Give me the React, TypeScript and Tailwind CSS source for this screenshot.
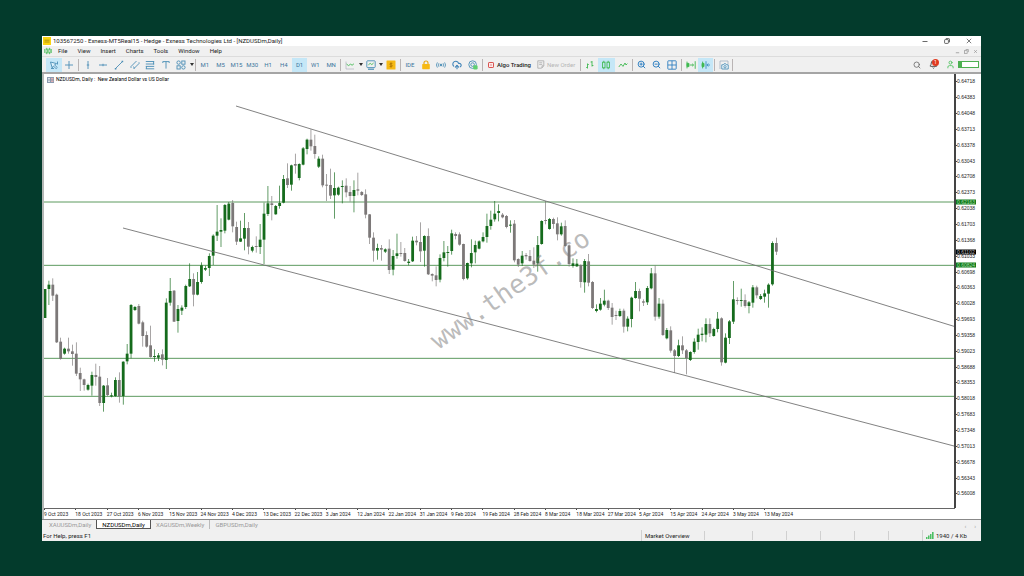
import React from 'react'
import { Bell, CloudUpload, Lock, Search, User, ZoomIn, ZoomOut } from 'lucide-react'
import clsx from 'clsx'

// high, body top, body bottom, low, 1 = up / 0 = down
type Bar = [number, number, number, number, number]

interface Segment {
  base: number
  bars: Bar[]
}

const BAR_STEP = 11.733

const segments: Segment[] = [
  {
    base: 348,
    bars: [
      [297, 297, 384, 384, 1], [272, 284, 297, 345, 1], [265, 284, 317, 333, 0], [311, 314, 457, 459, 0],
      [443, 455, 507, 509, 0], [473, 476, 491, 494, 1], [443, 476, 484, 491, 0], [464, 484, 492, 527, 0],
      [457, 491, 551, 558, 0], [533, 549, 568, 603, 0], [566, 568, 585, 602, 0], [581, 585, 599, 602, 1],
      [545, 555, 587, 617, 1], [521, 555, 561, 587, 0], [528, 560, 639, 648, 0], [585, 587, 639, 665, 1],
      [564, 586, 615, 619, 0], [608, 616, 619, 622, 1], [562, 570, 618, 620, 1], [547, 570, 619, 638, 0],
      [514, 515, 618, 644, 1], [462, 491, 514, 523, 1], [342, 345, 491, 505, 1], [348, 351, 360, 363, 1],
      [342, 348, 401, 403, 0], [392, 397, 438, 470, 0], [424, 435, 470, 473, 0], [407, 466, 501, 503, 0],
      [478, 498, 501, 515, 1], [489, 496, 503, 513, 1], [478, 493, 509, 526, 0], [325, 338, 510, 537, 1],
      [264, 303, 338, 347, 1], [300, 302, 395, 396, 0], [345, 357, 393, 428, 1], [346, 353, 362, 375, 1],
      [284, 288, 351, 357, 1], [220, 267, 289, 291, 1], [250, 267, 314, 349, 0], [246, 276, 314, 316, 1],
      [217, 226, 276, 281, 1], [227, 234, 239, 243, 1], [190, 198, 234, 258, 1], [133, 137, 197, 225, 1],
      [45, 125, 137, 153, 1], [85, 120, 125, 171, 1], [42, 45, 122, 130, 1], [36, 41, 89, 91, 1],
      [30, 39, 109, 127, 0], [95, 111, 155, 165, 0], [92, 145, 155, 156, 1], [69, 114, 146, 181, 1],
      [96, 114, 170, 193, 0], [167, 171, 182, 187, 1], [139, 168, 171, 188, 0], [102, 149, 171, 192, 1],
      [38, 71, 149, 222, 1],
    ],
  },
  {
    base: 63,
    bars: [
      [273, 325, 357, 363, 1], [303, 325, 330, 376, 0], [330, 333, 358, 359, 1], [272, 324, 333, 341, 1],
      [240, 252, 323, 325, 1], [205, 250, 270, 279, 0], [209, 211, 269, 287, 1], [176, 207, 212, 236, 0],
      [205, 207, 249, 256, 1], [156, 160, 209, 211, 1], [131, 134, 162, 178, 1], [103, 134, 154, 167, 0],
      [119, 153, 177, 191, 0], [184, 191, 215, 219, 1], [179, 191, 271, 277, 0], [237, 269, 272, 318, 0],
      [221, 270, 302, 312, 0], [232, 279, 301, 371, 1], [275, 278, 299, 302, 1], [256, 273, 276, 325, 1],
      [250, 272, 292, 307, 0], [273, 291, 303, 320, 0], [256, 285, 303, 352, 1], [233, 283, 287, 301, 0],
      [288, 291, 300, 303, 0], [283, 298, 359, 370, 0], [357, 358, 428, 447, 0], [412, 428, 467, 500, 0],
      [446, 459, 467, 494, 1], [450, 459, 464, 497, 0], [460, 463, 470, 474, 1], [433, 461, 525, 537, 0],
      [465, 483, 524, 541, 1], [416, 475, 483, 491, 1], [441, 474, 477, 485, 0], [459, 474, 498, 500, 0],
      [492, 500, 504, 511, 1], [425, 437, 499, 501, 1], [423, 437, 442, 451, 0], [382, 441, 469, 501, 0],
      [421, 423, 467, 515, 1], [400, 423, 538, 540, 0], [535, 537, 542, 559, 0], [514, 541, 555, 574, 0],
    ],
  },
  {
    base: 318,
    bars: [
      [223, 234, 299, 307, 1], [183, 217, 234, 244, 1], [198, 216, 219, 260, 1], [149, 160, 213, 224, 1],
      [157, 162, 168, 178, 0], [157, 163, 194, 197, 0], [191, 192, 297, 301, 0], [248, 249, 295, 299, 1],
      [178, 219, 250, 262, 1], [182, 195, 217, 250, 1], [181, 184, 206, 208, 1], [157, 171, 184, 187, 1],
      [101, 138, 171, 188, 1], [92, 119, 138, 149, 1], [63, 101, 118, 125, 1], [73, 93, 99, 124, 1],
      [99, 104, 112, 115, 0], [105, 108, 141, 145, 0], [121, 134, 137, 158, 1], [120, 131, 241, 247, 0],
      [235, 237, 254, 261, 0], [213, 227, 250, 258, 1], [219, 225, 229, 239, 0], [210, 228, 243, 245, 0],
      [202, 242, 254, 264, 0], [168, 195, 250, 275, 1], [121, 123, 192, 194, 1], [63, 120, 123, 133, 0],
      [114, 117, 147, 149, 1], [113, 117, 132, 146, 0], [112, 130, 163, 181, 0], [128, 139, 163, 167, 1],
      [121, 138, 198, 200, 0], [193, 196, 252, 260, 0], [235, 250, 258, 263, 1], [237, 251, 259, 261, 1],
      [253, 255, 306, 323, 0], [237, 243, 307, 338, 1], [222, 244, 308, 319, 0], [303, 306, 384, 387, 0],
      [373, 387, 393, 397, 1], [354, 371, 389, 392, 1], [329, 362, 374, 379, 1], [359, 362, 384, 390, 0],
      [369, 383, 411, 434, 0], [392, 405, 408, 420, 0], [386, 393, 408, 411, 1],
    ],
  },
  {
    base: 438,
    bars: [
      [266, 272, 320, 338, 0], [289, 296, 320, 334, 1], [230, 233, 297, 322, 1], [186, 213, 234, 236, 1],
      [206, 213, 236, 274, 0], [238, 244, 248, 258, 0], [198, 204, 247, 255, 1], [144, 160, 205, 208, 1],
      [136, 160, 290, 302, 0], [234, 251, 290, 296, 1], [239, 251, 345, 348, 0], [324, 330, 355, 358, 1],
      [319, 331, 392, 398, 0], [387, 391, 408, 459, 0], [359, 376, 408, 411, 1], [349, 376, 391, 402, 0],
      [387, 391, 415, 463, 0], [394, 396, 420, 423, 1], [355, 365, 396, 401, 1], [326, 344, 366, 389, 1],
      [322, 341, 345, 364, 1], [295, 312, 344, 367, 1], [295, 312, 340, 351, 0], [323, 327, 348, 350, 1],
      [276, 296, 327, 337, 1], [292, 295, 427, 437, 0], [340, 353, 428, 430, 1], [300, 304, 354, 372, 1],
      [183, 238, 305, 312, 1], [232, 240, 243, 254, 0], [206, 240, 243, 260, 1], [223, 240, 258, 263, 0],
      [243, 247, 258, 280, 1], [195, 202, 248, 263, 1], [197, 202, 226, 235, 0], [222, 228, 237, 240, 1],
      [209, 220, 230, 248, 1], [190, 194, 221, 263, 1], [64, 69, 193, 197, 1], [53, 69, 95, 105, 0],
    ],
  },
]

const candles = segments
  .flatMap(({ base, bars }) => bars.map(([h, t, b, l, up]) => ({ h: h + base, t: t + base, b: b + base, l: l + base, up })))
  .map((c, i) => ({ ...c, x: 3 + i * BAR_STEP }))

const levels = [384, 574, 853, 967]

const prices = [
  '0.64718', '0.64383', '0.64048', '0.63713', '0.63378', '0.63043', '0.62708', '0.62373', '0.62038',
  '0.61703', '0.61368', '0.61033', '0.60698', '0.60363', '0.60028', '0.59693', '0.59358', '0.59023',
  '0.58688', '0.58353', '0.58018', '0.57683', '0.57348', '0.57013', '0.56678', '0.56343', '0.56008',
]

const dates = [
  '9 Oct 2023', '18 Oct 2023', '27 Oct 2023', '6 Nov 2023', '15 Nov 2023', '24 Nov 2023', '4 Dec 2023',
  '13 Dec 2023', '22 Dec 2023', '3 Jan 2024', '12 Jan 2024', '22 Jan 2024', '31 Jan 2024', '9 Feb 2024',
  '19 Feb 2024', '28 Feb 2024', '8 Mar 2024', '18 Mar 2024', '27 Mar 2024', '5 Apr 2024', '15 Apr 2024',
  '24 Apr 2024', '3 May 2024', '13 May 2024',
]

const menus = ['File', 'View', 'Insert', 'Charts', 'Tools', 'Window', 'Help']
const timeframes = ['M1', 'M5', 'M15', 'M30', 'H1', 'H4', 'D1', 'W1', 'MN']
const tabs = ['XAUUSDm,Daily', 'NZDUSDm,Daily', 'XAGUSDm,Weekly', 'GBPUSDm,Daily']

const BLUE = '#4a8db5'
const GREEN = '#3fb950'

const Icon: React.FC<{ color?: string; children: React.ReactNode }> = ({ color = BLUE, children }) => (
  <svg viewBox="0 0 10 10" className="size-[10px]" fill="none" stroke={color} strokeWidth="0.9">
    {children}
  </svg>
)

const Tool: React.FC<{ label: string; active?: boolean; children: React.ReactNode }> = ({ label, active, children }) => (
  <button
    aria-label={label}
    className={clsx('flex h-[14px] flex-1 items-center justify-center text-[#3d759d]', active && 'bg-[#c5e7f7]')}
  >
    {children}
  </button>
)

const Sep = () => <div className="mx-px h-[12px] w-px bg-[#b9b4b4]" />

const Caret = () => (
  <div className="flex w-[5px] justify-center">
    <svg viewBox="0 0 4 3" className="h-[3px] w-[4px]">
      <path d="M0 0h4L2 3z" fill="#333" />
    </svg>
  </div>
)

const TitleBar = () => (
  <header className="flex h-[10px] items-center bg-white pl-px">
    <svg viewBox="0 0 8 8" className="size-[8px]">
      <rect width="8" height="8" fill="#f9d312" />
      <path d="M1.5 3.2h5M1.5 5h5" stroke="#7d6a10" strokeWidth="0.6" />
    </svg>
    <h1 className="ml-[2px] flex-1 truncate text-[6px] leading-[10px] text-[#222]">
      103567250 - Exness-MT5Real15 - Hedge - Exness Technologies Ltd - [NZDUSDm,Daily]
    </h1>
    <div className="flex pr-px text-[#444]">
      <button aria-label="Minimize" className="flex w-[22px] justify-center">
        <svg viewBox="0 0 6 6" className="size-[6px]" stroke="currentColor" strokeWidth="0.8"><path d="M0.5 3.5h5" /></svg>
      </button>
      <button aria-label="Restore" className="flex w-[22px] justify-center">
        <svg viewBox="0 0 6 6" className="size-[6px]" fill="none" stroke="currentColor" strokeWidth="0.8">
          <rect x="0.6" y="1.6" width="3.8" height="3.8" rx="0.6" />
          <path d="M1.8 0.6h3a0.7 0.7 0 0 1 0.7 0.7v3" />
        </svg>
      </button>
      <button aria-label="Close" className="flex w-[22px] justify-center">
        <svg viewBox="0 0 6 6" className="size-[6px]" stroke="currentColor" strokeWidth="0.7"><path d="M0.8 0.8l4.4 4.4M5.2 0.8L0.8 5.2" /></svg>
      </button>
    </div>
  </header>
)

const MenuBar = () => (
  <nav className="flex h-[10px] items-center bg-[#f0f0f0] pl-[2px] text-[6px] leading-[10px] text-[#222]">
    <svg viewBox="0 0 8 8" className="mr-[6px] size-[8px]" fill="none" stroke={GREEN} strokeWidth="0.7">
      <path d="M0.6 2v4M7.4 2v4" />
      <rect x="2" y="2" width="1.4" height="4" />
      <rect x="4.8" y="2" width="1.4" height="4" />
      <path d="M2.7 0.8V2M2.7 6v1.2M5.5 0.8V2M5.5 6v1.2" />
    </svg>
    <div className="flex flex-1 gap-[10px]">
      {menus.map((m) => (
        <button key={m}>{m}</button>
      ))}
    </div>
    <div className="flex gap-[4px] pr-[3px] text-[#999]">
      <button aria-label="Minimize chart">
        <svg viewBox="0 0 6 6" className="size-[5px]" stroke="currentColor"><path d="M1 4.5h4" /></svg>
      </button>
      <button aria-label="Restore chart">
        <svg viewBox="0 0 6 6" className="size-[5px]" fill="none" stroke="currentColor" strokeWidth="0.9">
          <rect x="0.6" y="2" width="3.2" height="3.2" /><path d="M2 0.6h3.2v3.2" />
        </svg>
      </button>
      <button aria-label="Close chart">
        <svg viewBox="0 0 6 6" className="size-[5px]" stroke="currentColor"><path d="M1.5 1.5l3 3M4.5 1.5l-3 3" /></svg>
      </button>
    </div>
  </nav>
)

const Toolbar = () => (
  <div className="flex h-[16px] items-center border-t border-[#dcdcdc] bg-[#f0f0f0] pl-1 text-[6px]">
    <div className="flex w-[31px]">
      <Tool label="Cursor" active>
        <Icon><path d="M1.5 2l6 1.6-2 1.3 2.8 2.6-1.2 1.1-2.7-2.6-1.2 1.9z" fill="#dff2fb" /><path d="M2 8.5h3M8.5 1.5v3" /></Icon>
      </Tool>
      <Tool label="Crosshair"><Icon><path d="M5 1v8M1 5h8" /></Icon></Tool>
    </div>
    <Sep />
    <div className="flex w-[109px]">
      <Tool label="Vertical line"><Icon><path d="M5 1v8M3.8 5h2.4" /></Icon></Tool>
      <Tool label="Horizontal line"><Icon><path d="M1 5h8M5 3.8v2.4" /></Icon></Tool>
      <Tool label="Trendline">
        <Icon><path d="M1.5 8.5l7-7" /><path d="M0.8 8h1.6v1.4H0.8zM7.6 0.8h1.6v1.4H7.6z" fill={BLUE} stroke="none" /></Icon>
      </Tool>
      <Tool label="Channel"><Icon><path d="M1 6.5L6.5 1M3.5 9L9 3.5M1 6.5v1.4M9 3.5v-1.2M3 6.6l1.8 1.6" /></Icon></Tool>
      <Tool label="Fibonacci"><Icon><path d="M0.8 1.5h8.4M0.8 4h8.4M0.8 6.4h8.4M0.8 8.8h8.4M8.6 1.5v3M1.4 6.4v2.4" /></Icon></Tool>
      <Tool label="Text"><Icon><path d="M1.8 3V1.6h6.4V3M5 1.6v7" /></Icon></Tool>
      <Tool label="Objects">
        <Icon><circle cx="2.6" cy="2.6" r="1.7" /><rect x="5.8" y="1" width="3.2" height="3.2" /><rect x="1" y="5.8" width="3.2" height="3.2" /><circle cx="7.4" cy="7.4" r="1.7" /></Icon>
      </Tool>
    </div>
    <Caret />
    <Sep />
    <div className="flex w-[142px]">
      {timeframes.map((t) => (
        <Tool key={t} label={t} active={t === 'D1'}>{t}</Tool>
      ))}
    </div>
    <Sep />
    <div className="flex w-[16px]">
      <Tool label="Chart type"><Icon><path d="M1 1.5v7.5h8" stroke="#aab" strokeWidth="0.6" /><path d="M1.5 4l2 1.6 2-1.4 1.6 1 1.8-1.4" stroke={GREEN} /></Icon></Tool>
    </div>
    <Caret />
    <div className="flex w-[15px]">
      <Tool label="Template">
        <Icon><rect x="0.8" y="0.8" width="8.4" height="6.8" rx="0.8" /><path d="M2.4 4.8l1.8-1.4 1.6 1.2 1.8-1.6" stroke={GREEN} /><path d="M2 9.2h6" strokeWidth="1.2" /></Icon>
      </Tool>
    </div>
    <Caret />
    <div className="flex w-[16px]">
      <Tool label="Market">
        <Icon color="#a66f00"><rect x="0.5" y="0.5" width="9" height="9" rx="0.5" fill="#f5b916" stroke="none" /><path d="M6.4 3.4H4.6a0.8 0.8 0 0 0 0 1.6h0.9a0.8 0.8 0 0 1 0 1.6H3.6M5 2.4v5.2" strokeWidth="0.7" /></Icon>
      </Tool>
    </div>
    <Sep />
    <div className="flex w-[79px]">
      <Tool label="IDE">IDE</Tool>
      <Tool label="Lock">
        <Icon color="#e5a50f"><path d="M3 4.4V3a2 2 0 0 1 4 0v1.4" strokeWidth="1.1" /><rect x="1.2" y="4" width="7.6" height="5.2" rx="0.6" fill="#f7b912" stroke="none" /></Icon>
      </Tool>
      <Tool label="Signals"><Icon><circle cx="5" cy="5" r="0.9" fill={BLUE} /><path d="M3 3.2a2.6 2.6 0 0 0 0 3.6M7 3.2a2.6 2.6 0 0 1 0 3.6M1.4 2.4a4.2 4.2 0 0 0 0 5.2M8.6 2.4a4.2 4.2 0 0 1 0 5.2" strokeWidth="0.8" /></Icon></Tool>
      <Tool label="Cloud"><CloudUpload className="size-[10px] text-[#3f83b8]" strokeWidth={2.6} /></Tool>
      <Tool label="Community">
        <Icon><circle cx="4.6" cy="4.6" r="3.8" /><circle cx="4.6" cy="4.6" r="1.8" /><rect x="5.2" y="5.2" width="4.4" height="4.4" rx="1.4" fill="#5fcf70" stroke="none" /></Icon>
      </Tool>
    </div>
    <Sep />
    <button className="flex w-[50px] items-center gap-[3px] pl-1 font-medium text-[#222]">
      <svg viewBox="0 0 6 6" className="size-[6px]" fill="#fbe9e9" stroke="#d9534f"><rect x="0.5" y="0.5" width="5" height="5" rx="0.6" /><path d="M2 3h2" strokeWidth="0.6" /></svg>
      <span className="whitespace-nowrap">Algo Trading</span>
    </button>
    <button className="flex w-[45px] items-center gap-[2px] pl-[3px] text-[#b5b5b5]">
      <svg viewBox="0 0 8 9" className="h-[9px] w-[8px]" fill="none" stroke="#aaa" strokeWidth="0.8"><path d="M0.8 0.8h6v5L4.6 8.2H0.8zM2.2 2.8h3M2.2 4.6h3M5 8v-2.2h1.8" /></svg>
      <span className="whitespace-nowrap">New Order</span>
    </button>
    <Sep />
    <div className="flex w-[49px]">
      <Tool label="Bar chart"><Icon color={GREEN}><path d="M2.5 3.5v5M1.2 7.5h1.3M2.5 4.5h1.3M7 1v5.5M5.6 2h1.4M7 5.5h1.4" /></Icon></Tool>
      <Tool label="Candles" active><Icon color={GREEN}><rect x="1.6" y="2.2" width="2.4" height="5.6" /><rect x="6" y="2.2" width="2.4" height="5.6" /><path d="M2.8 0.8v1.4M2.8 7.8v1.4M7.2 0.8v1.4M7.2 7.8v1.4" /></Icon></Tool>
      <Tool label="Line chart"><Icon color={GREEN}><path d="M0.8 7l2.2-3 2 2.4L7 3l1 2 1.4-1.4" /></Icon></Tool>
    </div>
    <Sep />
    <div className="flex w-[46px]">
      <Tool label="Zoom in"><ZoomIn className="size-[9px] text-[#2f7fc1]" strokeWidth={2.6} /></Tool>
      <Tool label="Zoom out"><ZoomOut className="size-[9px] text-[#2f7fc1]" strokeWidth={2.6} /></Tool>
      <Tool label="Tile windows"><Icon color="#2f7fc1"><rect x="0.8" y="0.8" width="8.4" height="8.4" rx="0.6" /><path d="M5 0.8v8.4M0.8 5h8.4" /></Icon></Tool>
    </div>
    <Sep />
    <div className="flex w-[30px]">
      <Tool label="Auto scroll"><Icon color={GREEN}><path d="M1 1.6v6.8M9.2 1.2v7.6M4 5h3.4M6.2 3.8L7.6 5 6.2 6.2" /><path d="M1 3.4h2v3.2H1z" fill={GREEN} /></Icon></Tool>
      <Tool label="Chart shift" active><Icon color={GREEN}><path d="M1.6 1.6v6.8M1 3.4h2v3.2H1z" fill={GREEN} /><path d="M5 1.2v7.6M9 5H6M7.4 3.6L5.8 5l1.6 1.4" stroke="#3a8fbe" /></Icon></Tool>
    </div>
    <Sep />
    <div className="flex w-[15px]">
      <Tool label="Screenshot"><Icon><path d="M1 9V1h8v3" stroke="#9ab" strokeWidth="0.7" /><path d="M2.8 4.8h1.6l0.6-1h1.8l0.6 1h1.8v4.2H2.8z" fill="#fff" /><circle cx="6" cy="6.8" r="1.2" /></Icon></Tool>
    </div>
    <Sep />
    <div className="ml-auto flex items-center gap-[8px] pr-[2px]">
      <button aria-label="Search"><Search className="size-[8px] text-[#666]" strokeWidth={2.4} /></button>
      <button aria-label="Notifications" className="relative">
        <Bell className="size-[9px] text-[#555]" strokeWidth={2.6} />
        <span className="absolute -top-px left-[3px] flex size-[7px] items-center justify-center rounded-full bg-[#e03a20] text-[5px] leading-none text-white">1</span>
      </button>
      <div className="flex items-center gap-[3px]">
        <button aria-label="Account"><User className="size-[9px] text-[#5cc46a]" strokeWidth={2.6} /></button>
        <div className="h-[7px] w-[21px] border border-[#4caf50] bg-white">
          <div className="h-full w-[3px] bg-[#4caf50]" />
        </div>
      </div>
    </div>
  </div>
)

const Chart = () => (
  <div className="relative min-w-0 flex-1">
    <svg viewBox="0 0 2730 1302" preserveAspectRatio="none" className="absolute inset-0 h-full w-full">
      {levels.map((y) => (
        <path key={y} d={`M0 ${y}H2730`} stroke="#5d9a5f" strokeWidth="3" />
      ))}
      {candles.map((c) => (
        <g key={c.x} fill={c.up ? '#156b1c' : '#7c7878'}>
          <rect x={c.x - 1} y={c.h} width="2" height={c.l - c.h} />
          <rect x={c.x - 4.2} y={c.t} width="8.4" height={Math.max(c.b - c.t, 3)} />
        </g>
      ))}
      <path d="M576 96L2730 757M237 462L2730 1116" stroke="#6e6e6e" strokeWidth="2.6" />
    </svg>
    <div className="absolute top-[2px] left-[3px] flex items-center gap-[2px] text-[5px] leading-[7px] text-black">
      <svg viewBox="0 0 7 6" className="h-[6px] w-[7px]">
        <path d="M0 0h7v6H0z" fill="#8a9bb0" />
        <path d="M1 1.5h2M1 3h2M1 4.5h2" stroke="#fff" strokeWidth="0.7" />
        <path d="M4 1.5h2.4M4 3h2.4M4 4.5h2.4" stroke="#f3b3b3" strokeWidth="0.8" />
      </svg>
      NZDUSDm, Daily :&nbsp; New Zealand Dollar vs US Dollar
    </div>
    <span className="absolute top-[49.5%] left-[51.2%] -translate-x-1/2 -translate-y-1/2 -rotate-[35deg] font-['DejaVu_Sans_Mono',monospace] text-[26px] leading-none whitespace-nowrap text-[#777]/50">
      www.the3f.co
    </span>
  </div>
)

const PriceScale = () => (
  <div className="relative w-[27px] border-l-2 border-[#444] font-['Liberation_Sans',Arial,sans-serif] text-[5px] leading-none text-[#222]">
    <ol className="flex h-[98.6%] flex-col">
      {prices.map((p) => (
        <li key={p} className="flex flex-1 items-center">
          <i className="h-px w-px bg-[#444]" />
          {p}
        </li>
      ))}
    </ol>
    <span className="absolute top-[29.4%] left-0 -translate-y-1/2 bg-[#0f7a18] px-px text-[#a5d8a8]">0.62163</span>
    <span className="absolute top-[40.9%] left-0 -translate-y-1/2 bg-black px-px text-[#bbb]">0.61102</span>
    <span className="absolute top-[43.9%] left-0 -translate-y-1/2 bg-[#0f7a18] px-px text-[#a5d8a8]">0.60824</span>
  </div>
)

const StatusBar = () => (
  <footer className="flex h-[11px] items-center bg-[#f0f0f0] pl-px text-[6px] leading-[11px] text-[#222]">
    <span className="flex-1">For Help, press F1</span>
    <span className="w-[63px] border-l border-[#d0d0d0] pl-[3px]">Market Overview</span>
    <span className="h-[9px] w-[48px] border-l border-[#d0d0d0]" />
    {[0, 1, 2, 3, 4].map((i) => (
      <span key={i} className="h-[9px] w-[34px] border-l border-[#d0d0d0]" />
    ))}
    <span className="flex w-[59px] items-center gap-[2px] border-l border-[#d0d0d0] pl-[3px]">
      <svg viewBox="0 0 8 7" className="h-[7px] w-[8px]" fill="#4cbf63">
        <path d="M0 5h1.5v2H0zM2 3.6h1.5V7H2zM4 2h1.5v5H4zM6 0h1.6v7H6z" />
      </svg>
      1940 / 4 Kb
    </span>
  </footer>
)

export default function App() {
  return (
    <div className="flex h-screen bg-[#033b2c] pt-[36px] pr-[43px] pb-[35px] pl-[42px] font-[Roboto,'Liberation_Sans',sans-serif]">
      <main className="flex min-w-0 flex-1 flex-col overflow-hidden bg-white">
        <TitleBar />
        <MenuBar />
        <Toolbar />
        <div className="h-[2px] bg-[#a5a5a5]" />
        <section className="flex min-h-0 flex-1 flex-col border-l-2 border-[#b4b8b6]">
          <div className="flex min-h-0 flex-1">
            <Chart />
            <PriceScale />
          </div>
          <div className="mr-[26px] h-[11px] border-t border-[#666]">
            <ol className="grid w-[82.5%] grid-cols-24 text-[5px] leading-[8px] text-[#222]">
              {dates.map((d) => (
                <li key={d} className="whitespace-nowrap">
                  <i className="block h-px w-px bg-[#444]" />
                  {d}
                </li>
              ))}
            </ol>
          </div>
        </section>
        <div role="tablist" className="flex h-[11px] border-t border-[#888] bg-[#f0f0f0] pl-[2px] text-[6px] leading-[9px] text-[#999]">
          {tabs.map((t, i) => (
            <button
              key={t}
              role="tab"
              aria-selected={i === 1}
              className={clsx('h-[9px] px-[5px]', i === 1 && 'border-x border-b border-[#555] bg-white text-black', i === 3 && 'border-l border-[#bbb]')}
            >
              {t}
            </button>
          ))}
          <div className="ml-auto flex gap-[8px] pr-[5px]">
            <button aria-label="Scroll left">‹</button>
            <button aria-label="Scroll right">›</button>
          </div>
        </div>
        <StatusBar />
      </main>
    </div>
  )
}
